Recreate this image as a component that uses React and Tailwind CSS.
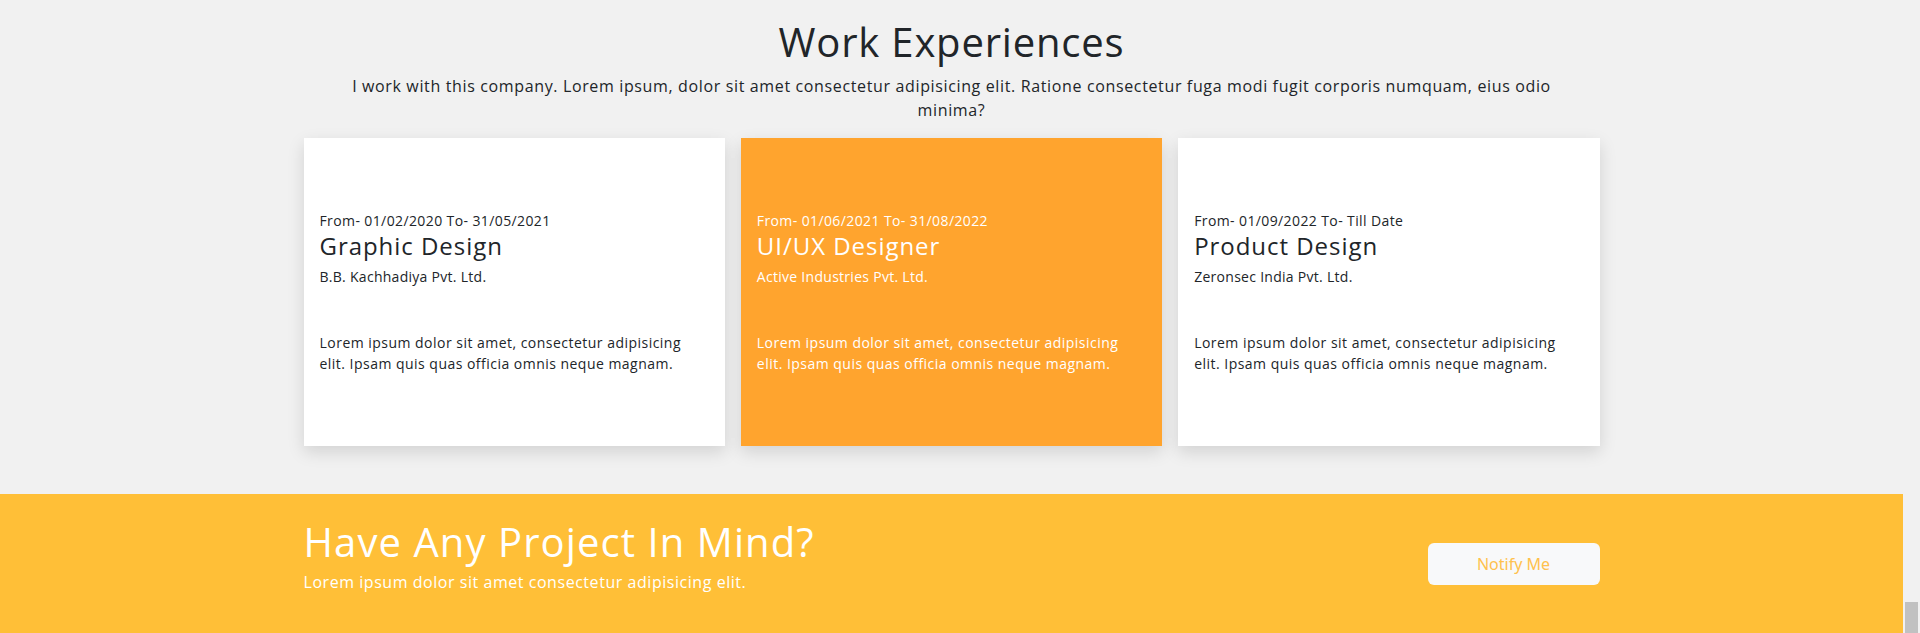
import React from 'react';

const jobs = [
  {
    from: '01/02/2020',
    to: '31/05/2021',
    title: 'Graphic Design',
    company: 'B.B. Kachhadiya Pvt. Ltd.',
    active: false,
  },
  {
    from: '01/06/2021',
    to: '31/08/2022',
    title: 'UI/UX Designer',
    company: 'Active Industries Pvt. Ltd.',
    active: true,
  },
  {
    from: '01/09/2022',
    to: 'Till Date',
    title: 'Product Design',
    company: 'Zeronsec India Pvt. Ltd.',
    active: false,
  },
];

function JobCard({ job }) {
  const tone = job.active ? 'bg-[#ffa42e] text-white' : 'bg-white text-[#212529]';
  return (
    <div className={`${tone} px-4 pt-[72px] pb-[72px] shadow-[0_6px_16px_rgba(0,0,0,0.13)]`}>
      <div className="text-[14px] leading-[21px] tracking-[0.028em]">
        From- {job.from} To- {job.to}
      </div>
      <h4 className="text-[24px] leading-[29px] tracking-[0.04em]">{job.title}</h4>
      <div className={`mt-[6px] text-[14px] leading-[21px] tracking-[0.02em] ${job.active ? 'font-medium' : ''}`}>
        {job.company}
      </div>
      <p className={`mt-[45px] text-[14px] leading-[21px] tracking-[0.034em] ${job.active ? 'font-medium' : ''}`}>
        Lorem ipsum dolor sit amet, consectetur adipisicing
        <br />
        elit. Ipsam quis quas officia omnis neque magnam.
      </p>
    </div>
  );
}

export default function App() {
  return (
    <div
      className="flex h-[633px] overflow-hidden bg-[#f1f1f1] text-[#212529]"
      style={{ fontFamily: '"Open Sans", "Noto Sans", sans-serif' }}
    >
      <div className="w-[1903px] shrink-0">
        <section className="pt-[18px] text-center">
          <h1 className="text-[40px] leading-[48px] tracking-[0.02em]">Work Experiences</h1>
          <p className="mt-2 text-[16px] leading-6 tracking-[0.04em]">
            I work with this company. Lorem ipsum, dolor sit amet consectetur adipisicing elit. Ratione consectetur fuga modi fugit corporis numquam, eius odio
            <br />
            minima?
          </p>
        </section>

        <div className="mx-auto mt-4 grid w-[1296px] grid-cols-3 gap-4">
          {jobs.map(job => (
            <JobCard key={job.title} job={job} />
          ))}
        </div>

        <section className="mt-12 h-[200px] bg-[#ffbf37] pt-6">
          <div className="mx-auto flex w-[1296px] items-start justify-between">
            <div className="text-white">
              <h2 className="text-[40px] leading-[48px] tracking-[0.027em]">Have Any Project In Mind?</h2>
              <p className="mt-1 text-[16px] leading-6 tracking-[0.034em]">Lorem ipsum dolor sit amet consectetur adipisicing elit.</p>
            </div>
            <button
              className="mt-[25px] h-[42px] w-[172px] rounded-md bg-[#f8f9fa] text-[16px] text-[#ffc14d]"
              style={{ fontFamily: '"Noto Sans", sans-serif' }}
            >
              Notify Me
            </button>
          </div>
        </section>
      </div>

      {/* scrollbar gutter */}
      <div className="flex w-[17px] shrink-0 flex-col justify-end bg-[#f1f1f1] px-[2px]">
        <div className="h-[31px] bg-[#c1c1c1]" />
      </div>
    </div>
  );
}
